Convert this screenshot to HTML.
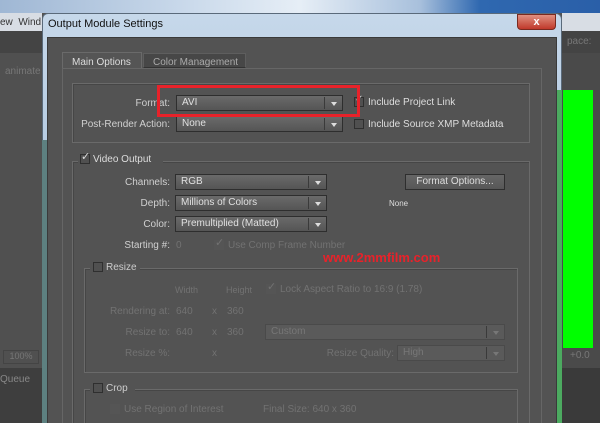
<!DOCTYPE html>
<html style="overflow:hidden;width:600px;height:423px"><head><style>
*{margin:0;padding:0;box-sizing:border-box}
body{width:600px;height:423px;overflow:hidden;position:relative;background:#535353;font-family:"Liberation Sans",sans-serif;font-size:10px;color:#d0d0d0}
.a{position:absolute}
.lbl{position:absolute;text-align:right;white-space:nowrap}
.dd{position:absolute;height:16px;background:linear-gradient(#6a6a6a,#555);border:1px solid #2e2e2e;color:#e0e0e0;padding-left:5px;line-height:14px;font-size:10px}
.dd:after{content:"";position:absolute;right:5px;top:6px;border-left:3.5px solid transparent;border-right:3.5px solid transparent;border-top:4px solid #ddd}
.dd:before{content:"";position:absolute;right:17px;top:1px;bottom:1px;border-left:1px solid #3a3a3a}
.dis{color:#727272}
.dd.dis{background:#5a5a5a;border-color:#4a4a4a;color:#777}
.dd.dis:after{border-top-color:#777}
.cb{position:absolute;width:10px;height:10px;border:1px solid #2f2f2f;background:#505050}
.box{position:absolute;border:1px solid #6a6a6a;box-shadow:inset 1px 1px 0 #464646}
</style></head><body>
<div class="a" style="left:0;top:0;width:600px;height:13px;background:linear-gradient(90deg,#9fb7d4,#c8d8ea 30%,#e6eef6 50%,#a8c0dc 70%,#2f68b0 80%,#2a5fa8)"></div>
<div class="a" style="left:0;top:13px;width:42px;height:18px;background:#d8dde4;color:#333;font-size:10px;padding:4px 0 0 0">ew&nbsp;&nbsp;Wind</div>
<div class="a" style="left:0;top:31px;width:42px;height:22px;background:#444"></div>
<div class="a" style="left:0;top:53px;width:42px;height:370px;background:#505050"></div>
<div class="a" style="left:5px;top:66px;color:#777">animate</div>
<div class="a" style="left:3px;top:350px;width:36px;height:14px;border:1px solid #444;color:#777;text-align:center;font-size:9px">100%</div>
<div class="a" style="left:0;top:368px;width:42px;height:55px;background:#3e3e3e"></div>
<div class="a" style="left:0;top:374px;color:#888">Queue</div>
<div class="a" style="left:562px;top:13px;width:38px;height:18px;background:#d8dde4"></div>
<div class="a" style="left:562px;top:31px;width:38px;height:22px;background:#444;color:#777;padding:5px 0 0 5px">pace:</div>
<div class="a" style="left:562px;top:53px;width:38px;height:370px;background:#4a4a4a"></div>
<div class="a" style="left:563px;top:90px;width:30px;height:258px;background:#00ff00"></div>
<div class="a" style="left:570px;top:350px;color:#777">+0.0</div>
<div class="a" style="left:562px;top:368px;width:38px;height:55px;background:#3a3a3a"></div>
<div class="a" style="left:42px;top:13px;width:520px;height:410px;border-radius:6px 6px 0 0;background:linear-gradient(#c6d8ea,#a9c2dc 60%,#8ca7c4);border:1px solid #5a6a7a"></div>
<div class="a" style="left:42px;top:140px;width:5px;height:283px;background:#5d8080"></div>
<div class="a" style="left:557px;top:90px;width:5px;height:333px;background:#4caa60"></div>
<div class="a" style="left:48px;top:18px;color:#111;font-size:11px">Output Module Settings</div>
<div class="a" style="left:517px;top:14px;width:39px;height:16px;border-radius:0 0 4px 4px;background:linear-gradient(#e09080,#c0392b);border:1px solid #7a2a20;color:#fff;font-weight:bold;text-align:center;font-size:11px;line-height:14px">x</div>
<div class="a" style="left:47px;top:37px;width:510px;height:386px;background:#535353;border:1px solid #3a3a3a;border-bottom:none"></div>
<div class="a" style="left:62px;top:52px;width:80px;height:17px;background:#555;border:1px solid #6a6a6a;border-bottom:none;padding:4px 0 0 9px;color:#ddd">Main Options</div>
<div class="a" style="left:143px;top:53px;width:103px;height:15px;background:#474747;border:1px solid #5e5e5e;border-bottom:1px solid #333;padding:3px 0 0 9px;color:#aaa">Color Management</div>
<div class="a" style="left:62px;top:68px;width:480px;height:355px;border:1px solid #666;border-bottom:none"></div>
<div class="box" style="left:72px;top:83px;width:458px;height:60px"></div>
<div class="lbl" style="left:60px;width:110px;top:98px">Format:</div>
<div class="dd" style="left:176px;top:95px;width:167px">AVI</div>
<div class="cb" style="left:354px;top:97px"></div><div class="a" style="left:355px;top:94px;color:#ccc">✓</div>
<div class="a" style="left:368px;top:97px;color:#ddd">Include Project Link</div>
<div class="lbl" style="left:60px;width:110px;top:119px">Post-Render Action:</div>
<div class="dd" style="left:176px;top:116px;width:167px">None</div>
<div class="cb" style="left:354px;top:119px"></div>
<div class="a" style="left:368px;top:119px;color:#ddd">Include Source XMP Metadata</div>
<div class="a" style="left:157px;top:85px;width:203px;height:32px;border:3px solid #e8222a"></div>
<div class="box" style="left:72px;top:161px;width:458px;height:262px;border-bottom:none"></div>
<div class="a" style="left:78px;top:153px;width:85px;height:14px;background:#535353"></div>
<div class="cb" style="left:80px;top:154px"></div><div class="a" style="left:81px;top:150px;color:#ddd;font-size:11px">✓</div>
<div class="a" style="left:93px;top:154px;color:#ddd">Video Output</div>
<div class="lbl" style="left:60px;width:110px;top:177px">Channels:</div>
<div class="dd" style="left:175px;top:174px;width:152px">RGB</div>
<div class="a" style="left:405px;top:174px;width:100px;height:16px;background:linear-gradient(#666,#575757);border:1px solid #2e2e2e;text-align:center;line-height:14px;color:#ddd">Format Options...</div>
<div class="lbl" style="left:60px;width:110px;top:198px">Depth:</div>
<div class="dd" style="left:175px;top:195px;width:152px">Millions of Colors</div>
<div class="a" style="left:389px;top:199px;font-size:8px;color:#ddd">None</div>
<div class="lbl" style="left:60px;width:110px;top:219px">Color:</div>
<div class="dd" style="left:175px;top:216px;width:152px">Premultiplied (Matted)</div>
<div class="lbl" style="left:60px;width:110px;top:240px">Starting #:</div>
<div class="a dis" style="left:176px;top:240px">0</div>
<div class="cb" style="left:214px;top:240px;border-color:#555;background:#555"></div><div class="a dis" style="left:215px;top:236px;font-size:11px">✓</div>
<div class="a dis" style="left:228px;top:240px">Use Comp Frame Number</div>
<div class="a" style="left:323px;top:250px;color:#e8222a;font-weight:bold;font-size:13px">www.2mmfilm.com</div>
<div class="box" style="left:84px;top:268px;width:434px;height:105px"></div>
<div class="a" style="left:90px;top:261px;width:50px;height:14px;background:#535353"></div>
<div class="cb" style="left:93px;top:262px"></div>
<div class="a" style="left:106px;top:262px;color:#ccc">Resize</div>
<div class="a dis" style="left:175px;top:285px;font-size:9px">Width</div>
<div class="a dis" style="left:226px;top:285px;font-size:9px">Height</div>
<div class="cb" style="left:266px;top:284px;border-color:#555;background:#555"></div><div class="a dis" style="left:267px;top:280px;font-size:11px">✓</div>
<div class="a dis" style="left:280px;top:284px">Lock Aspect Ratio to 16:9 (1.78)</div>
<div class="lbl dis" style="left:60px;width:110px;top:306px">Rendering at:</div>
<div class="a dis" style="left:176px;top:306px">640</div><div class="a dis" style="left:212px;top:306px">x</div><div class="a dis" style="left:227px;top:306px">360</div>
<div class="lbl dis" style="left:60px;width:110px;top:327px">Resize to:</div>
<div class="a dis" style="left:176px;top:327px">640</div><div class="a dis" style="left:212px;top:327px">x</div><div class="a dis" style="left:227px;top:327px">360</div>
<div class="dd dis" style="left:265px;top:324px;width:240px">Custom</div>
<div class="lbl dis" style="left:60px;width:110px;top:348px">Resize %:</div>
<div class="a dis" style="left:212px;top:348px">x</div>
<div class="lbl dis" style="left:300px;width:94px;top:348px">Resize Quality:</div>
<div class="dd dis" style="left:397px;top:345px;width:108px">High</div>
<div class="box" style="left:84px;top:389px;width:434px;height:34px;border-bottom:none"></div>
<div class="a" style="left:90px;top:382px;width:45px;height:14px;background:#535353"></div>
<div class="cb" style="left:93px;top:383px"></div>
<div class="a" style="left:106px;top:383px;color:#ccc">Crop</div>
<div class="cb" style="left:110px;top:404px;border-color:#555;background:#555"></div>
<div class="a dis" style="left:124px;top:404px">Use Region of Interest</div>
<div class="a dis" style="left:263px;top:404px">Final Size: 640 x 360</div>
</body></html>
